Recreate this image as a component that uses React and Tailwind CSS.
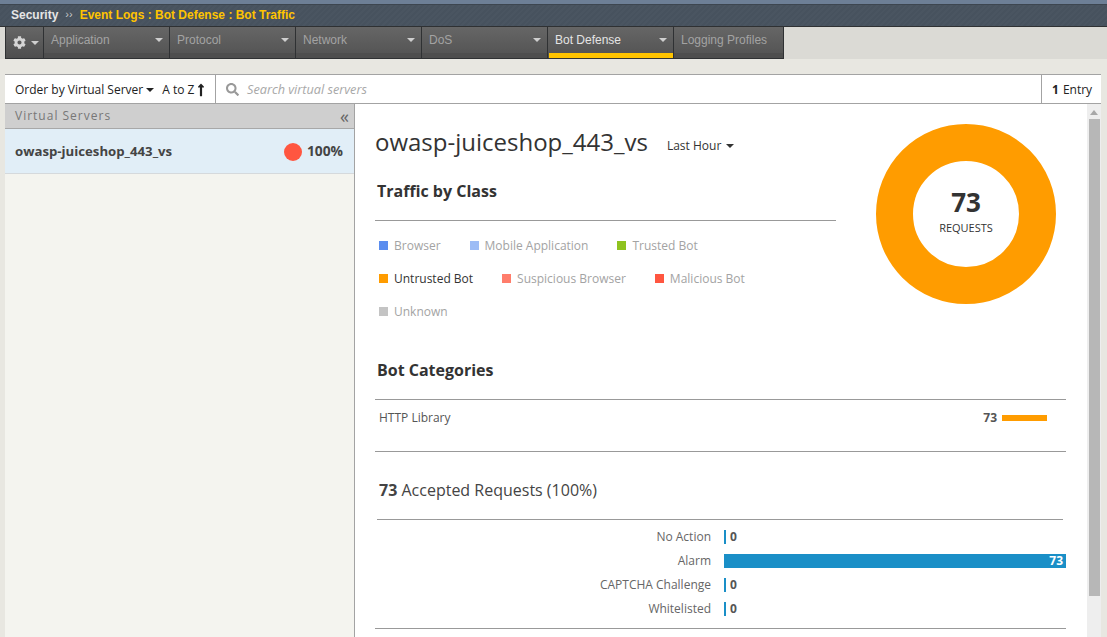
import React from "react";
import { FaCog, FaSearch, FaLongArrowAltUp } from "react-icons/fa";

const tabs = [
  { name: "Application", w: "w-[126px]", menu: true },
  { name: "Protocol", w: "w-[126px]", menu: true },
  { name: "Network", w: "w-[126px]", menu: true },
  { name: "DoS", w: "w-[126px]", menu: true },
  { name: "Bot Defense", w: "w-[126px]", menu: true, active: true },
  { name: "Logging Profiles", w: "w-[110px]" },
];

const legend = [
  [
    { name: "Browser", color: "bg-[#5b8def]" },
    { name: "Mobile Application", color: "bg-[#9dbcf5]" },
    { name: "Trusted Bot", color: "bg-[#8fc31f]" },
  ],
  [
    { name: "Untrusted Bot", color: "bg-[#ff9c00]", on: true },
    { name: "Suspicious Browser", color: "bg-[#ff7d6b]" },
    { name: "Malicious Bot", color: "bg-[#ff5640]" },
  ],
  [{ name: "Unknown", color: "bg-[#c4c4c4]" }],
];

const actions = [
  { name: "No Action", value: 0 },
  { name: "Alarm", value: 73 },
  { name: "CAPTCHA Challenge", value: 0 },
  { name: "Whitelisted", value: 0 },
];

function Caret({ className }) {
  return <span className={`inline-block w-0 h-0 border-x-[4px] border-x-transparent border-t-[4px] ${className}`} />;
}

function Tab({ tab }) {
  return (
    <div className={`${tab.w} h-full shrink-0 border-r border-[#2f3133] bg-gradient-to-b from-[#666] to-[#525252] pl-[7px] pr-[6px] pt-[5px] relative flex justify-between items-start`}>
      <span className={`text-[12px] leading-[16px] ${tab.active ? "text-[#e4e4e4] text-[11.8px]" : "text-[#a3a3a3]"}`}>{tab.name}</span>
      {tab.menu && <Caret className="mt-[6px] border-t-[#cfcfcf]" />}
      {tab.active ? (
        <div className="absolute left-[1px] right-0 bottom-0 h-[5px] bg-[#ffc400]" />
      ) : (
        <div className="absolute left-0 right-0 bottom-0 h-[5px] bg-[#4e4e4e]" />
      )}
    </div>
  );
}

export default function App() {
  return (
    <div className="h-[637px] w-[1107px] overflow-hidden bg-[#e8e7e1] flex flex-col font-['Open_Sans',sans-serif] text-[#333]">
      {/* Breadcrumb header */}
      <div className="h-[4px] bg-[#6d7f96]" />
      <div className="h-[23px] bg-[repeating-linear-gradient(135deg,#4a5561,#4a5561_2px,#47525e_2px,#47525e_4px)] border-t border-[#3d4650] border-b border-b-[#2f3133] flex items-center pl-[11px] pb-[2px] font-['Liberation_Sans',sans-serif] text-[12px] font-bold">
        <span className="text-[#e6e6e6]">Security</span>
        <span className="text-[#c9c9c9] font-normal text-[11px] ml-[7px] mr-[7px]">››</span>
        <span className="text-[#ffc400]">Event Logs : Bot Defense : Bot Traffic</span>
      </div>

      {/* Tab bar */}
      <div className="h-[32px] bg-[#dbdad5] pl-[5px] flex font-['Liberation_Sans',sans-serif]">
        <div className="flex h-full border-b border-l border-[#2f3133]">
          <div className="w-[38px] h-full shrink-0 border-r border-[#2f3133] bg-gradient-to-b from-[#666] to-[#4e4e4e] flex items-center pl-[7px] gap-[5px]">
            <FaCog size={13} className="text-[#d5d5d5]" />
            <Caret className="border-t-[#cfcfcf]" />
          </div>
          {tabs.map((tab) => (
            <Tab key={tab.name} tab={tab} />
          ))}
        </div>
      </div>

      {/* Toolbar */}
      <div className="mt-[15px] mx-[5px] mr-[6px] h-[30px] shrink-0 bg-white border-y border-[#a3a3a3] flex items-center text-[12px]">
        <div className="w-[211px] h-full flex items-center pl-[10px] pt-[2px] border-r border-[#a3a3a3] text-[#222]">
          <span>Order by Virtual Server</span>
          <Caret className="ml-[3px] border-t-[#222]" />
          <span className="ml-[8px]">A to Z</span>
          <FaLongArrowAltUp size={14} className="text-[#222]" />
        </div>
        <div className="flex-1 flex items-center pl-[10px] pt-[2px]">
          <FaSearch size={13} className="text-[#999]" />
          <span className="ml-[8px] italic text-[12.7px] text-[#a8a8a8]">Search virtual servers</span>
        </div>
        <div className="w-[60px] h-full flex items-center pl-[10px] pt-[2px] border-l border-[#a3a3a3] text-[#222]">
          <b>1</b>
          <span className="ml-[4px]">Entry</span>
        </div>
      </div>

      {/* Body */}
      <div className="flex-1 mx-[5px] mr-[6px] flex min-h-0 bg-white">
        {/* Left list */}
        <div className="w-[350px] shrink-0 border-r border-[#a3a3a3] bg-[#f4f4ef] flex flex-col">
          <div className="h-[25px] bg-[#cfcfcf] border-b border-[#a8a8a8] flex items-center justify-between pl-[10px] pr-[5px]">
            <span className="text-[12px] tracking-[1px] text-[#777]">Virtual Servers</span>
            <span className="text-[18px] leading-[20px] text-[#666]">«</span>
          </div>
          <div className="h-[45px] bg-[#e1eef7] border-b border-[#d5d9dc] flex items-center pl-[10px] pr-[11px] pt-[1px]">
            <span className="flex-1 text-[13.2px] font-bold text-[#444]">owasp-juiceshop_443_vs</span>
            <span className="w-[18px] h-[18px] rounded-full bg-[#ff5640]" />
            <span className="ml-[5px] text-[13.8px] font-bold text-[#444]">100%</span>
          </div>
        </div>

        {/* Detail */}
        <div className="flex-1 min-w-0 flex">
          <div className="flex-1 min-w-0 pl-[20px] pr-[21px]">
            <div className="flex">
              <div className="w-[461px] shrink-0">
                <div className="flex items-center mt-[22px] h-[32px]">
                  <span className="text-[24px] text-[#333]">owasp-juiceshop_443_vs</span>
                  <span className="ml-[19px] mt-[8px] text-[12px] text-[#333]">Last Hour</span>
                  <Caret className="ml-[5px] mt-[8px] border-t-[#333]" />
                </div>
                <div className="mt-[21px] pl-[2px] h-[30px] text-[16px] font-bold leading-[24px]">Traffic by Class</div>
                <div className="mt-[11px] border-t border-[#999]" />
                <div className="mt-[13px] pl-[4px] flex flex-col">
                  {legend.map((row, i) => (
                    <div key={i} className="h-[33px] flex items-start gap-[29px]">
                      {row.map((item) => (
                        <div key={item.name} className="flex items-center h-[24px]">
                          <span className={`w-[9px] h-[9px] mb-[1px] ${item.color}`} />
                          <span className={`ml-[6px] text-[12px] ${item.on ? "text-[#333]" : "text-[#a3a3a3]"}`}>{item.name}</span>
                        </div>
                      ))}
                    </div>
                  ))}
                </div>
              </div>
              <div className="flex-1 relative">
                <svg width="180" height="180" viewBox="0 0 180 180" className="absolute left-[40px] top-[20px]">
                  <circle cx="90" cy="90" r="71.5" fill="none" stroke="#ff9c00" strokeWidth="37" />
                </svg>
                <div className="absolute left-[40px] top-[20px] w-[180px] h-[180px] flex flex-col items-center justify-center pb-[7px]">
                  <span className="text-[26px] font-bold leading-[32px] text-[#333]">73</span>
                  <span className="mt-[3px] text-[11px] leading-[14px] text-[#333]">REQUESTS</span>
                </div>
              </div>
            </div>

            <div className="mt-[25px] pl-[2px] text-[16px] font-bold leading-[24px]">Bot Categories</div>
            <div className="mt-[17px] border-t border-[#999] flex items-center h-[53px] border-b pl-[4px]">
              <span className="flex-1 text-[12px] text-[#555] -mt-[16px]">HTTP Library</span>
              <span className="text-[12px] font-bold text-[#555] -mt-[16px]">73</span>
              <span className="ml-[5px] mr-[19px] w-[45px] h-[6px] bg-[#ff9c00] -mt-[16px]" />
            </div>

            <div className="mt-[26px] pl-[4px] text-[16px] leading-[24px] text-[#444]">
              <b>73</b> Accepted Requests (100%)
            </div>
            <div className="mt-[17px] ml-[2px] mr-[3px] border-t border-[#999]" />
            <div className="ml-[2px] pt-[5px] pb-[7px]">
              {actions.map((a) => (
                <div key={a.name} className="h-[24px] flex items-center">
                  <span className="w-[334px] text-right text-[12px] text-[#666]">{a.name}</span>
                  <div className="ml-[13px] flex-1 flex items-center">
                    {a.value > 0 ? (
                      <div className="w-full h-[14px] bg-[#1a8fc7] text-right pr-[3px] text-[12px] leading-[14px] font-bold text-white">{a.value}</div>
                    ) : (
                      <>
                        <div className="w-[2px] h-[14px] bg-[#1a8fc7]" />
                        <span className="ml-[4px] text-[12px] font-bold text-[#555]">0</span>
                      </>
                    )}
                  </div>
                </div>
              ))}
            </div>
            <div className="border-t border-[#999]" />
          </div>

          {/* Scrollbar */}
          <div className="w-[14px] shrink-0 bg-[#eeeeee] flex flex-col items-center">
            <span className="mt-[6px] w-0 h-0 border-x-[4px] border-x-transparent border-b-[5px] border-b-[#a8a8a8]" />
            <div className="mt-[4px] w-[11px] h-[477px] bg-[#b7b7b7]" />
          </div>
        </div>
      </div>
    </div>
  );
}
